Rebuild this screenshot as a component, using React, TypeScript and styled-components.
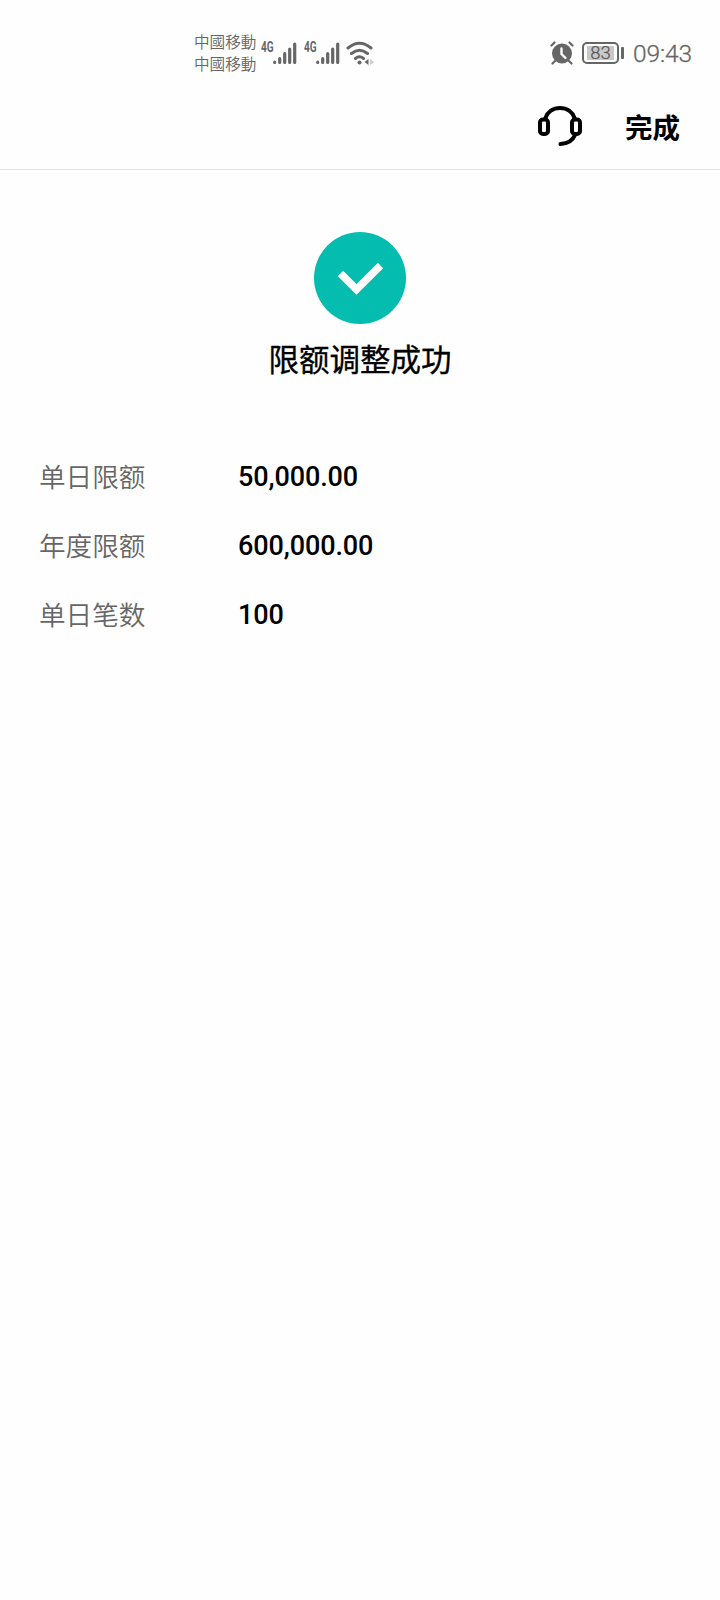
import React from 'react';
import styled, { createGlobalStyle } from 'styled-components';

const GlobalStyle = createGlobalStyle`
  * { box-sizing: border-box; }
  body { margin: 0; background: #fefefe; }
`;

const Screen = styled.main`
  width: 720px;
  height: 1600px;
  overflow: hidden;
  background: #fefefe;
  color: #000;
  font-family: Roboto, "Noto Sans CJK SC", sans-serif;
`;

const StatusBar = styled.div`
  display: flex;
  justify-content: space-between;
  height: 84px;
  padding: 30px 27px 0 194px;
  color: #666;
`;

const StatusGroup = styled.div`
  display: flex;
  align-items: flex-start;
`;

const Carriers = styled.div`
  width: 67px;
  font: 350 15.6px/22px "Noto Sans CJK TC", sans-serif;
  white-space: nowrap;
`;

const Signal = styled.div`
  display: flex;
  align-items: flex-start;
  width: 43px;
  padding-top: 11px;
`;

const Network = styled.span`
  display: block;
  width: 12px;
  font: 700 14px/13px Roboto, sans-serif;
  transform: scaleX(0.72);
  transform-origin: left center;
`;

const Wifi = styled.svg`
  margin: 11px 0 0 -1px;
`;

const Alarm = styled.svg`
  margin: 11px 8px 0 0;
`;

const Battery = styled.div`
  display: flex;
  align-items: center;
  gap: 2px;
  height: 22px;
  margin-top: 12px;
`;

const BatteryBody = styled.div`
  width: 37px;
  height: 22px;
  padding: 2px;
  border: 2px solid #666;
  border-radius: 5px;
`;

const Charge = styled.div`
  width: 27px;
  height: 14px;
  margin-left: 1px;
  background: #c8c8c8;
  color: #555;
  font: 300 18.5px/15px Roboto, sans-serif;
  -webkit-text-stroke: 0.2px #555;
  text-align: center;
`;

const BatteryTip = styled.span`
  width: 3px;
  height: 12px;
  border-radius: 1px;
  background: #666;
`;

const Clock = styled.time`
  width: 60px;
  margin: 12px 0 0 9px;
  font: 300 24.5px/24px Roboto, sans-serif;
  letter-spacing: -0.1px;
  -webkit-text-stroke: 0.3px #666;
  white-space: nowrap;
`;

const Header = styled.header`
  display: flex;
  align-items: center;
  justify-content: flex-end;
  gap: 42px;
  height: 86px;
  padding: 0 40px 2px 0;
  border-bottom: 1px solid #e4e4e4;
`;

const DoneButton = styled.button`
  padding: 0;
  border: 0;
  background: none;
  color: #000;
  font: 700 27.5px/40px "Noto Sans CJK SC", sans-serif;
`;

const Result = styled.section`
  display: flex;
  flex-direction: column;
  align-items: center;
  padding-top: 62px;
`;

const Title = styled.h1`
  margin: 12px 0 0;
  font: 400 30.5px/44px "Noto Sans CJK SC", sans-serif;
  -webkit-text-stroke: 0.35px #000;
`;

const Limits = styled.dl`
  display: grid;
  grid-template-columns: 199px 1fr;
  grid-auto-rows: 69px;
  align-items: center;
  margin: 62px 39px 0;
`;

const Label = styled.dt`
  padding-bottom: 2px;
  color: #666;
  font: 350 26.6px/40px "Noto Sans CJK SC", sans-serif;
`;

const Value = styled.dd`
  margin: 0;
  font: 500 27px/40px Roboto, sans-serif;
  letter-spacing: -0.1px;
`;

const limits = [
  ['单日限额', '50,000.00'],
  ['年度限额', '600,000.00'],
  ['单日笔数', '100'],
];

const SignalMeter = () => (
  <Signal>
    <Network>4G</Network>
    <svg width="24" height="24" viewBox="0 0 24 24" stroke="#666" strokeWidth="3.2" strokeLinecap="round">
      <path d="M1.7 21.2v.2M6.7 17.5v4M11.7 12.5v9M16.7 8v13.5M21.7 3v18.5" />
    </svg>
  </Signal>
);

export default function App() {
  return (
    <Screen>
      <GlobalStyle />
      <StatusBar>
        <StatusGroup>
          <Carriers>中國移動<br />中國移動</Carriers>
          <SignalMeter />
          <SignalMeter />
          <Wifi width="28" height="24" viewBox="0 0 28 24" fill="none" stroke="#666" strokeWidth="3" strokeLinecap="round">
            <path d="M2 7Q13.5-2.500 25 7M5.5 12.5Q13.5 6 21.5 12.5M9.5 17.5Q13.5 14 17.5 17.5" />
            <circle cx="13.5" cy="21.5" r="2" fill="#666" stroke="none" />
            <path d="M22.5 18v6l-4-3z" fill="#666" stroke="none" />
            <path d="M24 18v6l4-3z" fill="#ccc" stroke="none" />
          </Wifi>
        </StatusGroup>
        <StatusGroup>
          <Alarm width="24" height="24" viewBox="0 0 24 24" fill="none" stroke="#666" strokeWidth="2.2" strokeLinecap="round">
            <circle cx="12" cy="12.5" r="10" fill="#666" stroke="none" />
            <path d="M1.5 4.5l3-3M19.5 1.5l3 3M5 20l-2.500 2.500M19 20l2.500 2.500" />
            <path d="M11.5 7.5v5.500l4 4" stroke="#fefefe" strokeWidth="2.4" />
          </Alarm>
          <Battery>
            <BatteryBody><Charge>83</Charge></BatteryBody>
            <BatteryTip />
          </Battery>
          <Clock>09:43</Clock>
        </StatusGroup>
      </StatusBar>
      <Header>
        <svg width="46" height="42" viewBox="0 0 46 42" fill="none" stroke="#000" strokeWidth="4" strokeLinecap="round" aria-label="客服">
          <rect x="3" y="14.5" width="8" height="14.5" rx="3" />
          <rect x="35" y="14.5" width="8" height="14.5" rx="3" />
          <path d="M8.5 13C10.5 7 16 3 23 3s12.500 4 14.500 10M38 30c-2 5-7 8.500-14.500 9" />
        </svg>
        <DoneButton>完成</DoneButton>
      </Header>
      <Result>
        <svg width="92" height="92" viewBox="0 0 92 92">
          <circle cx="46" cy="46" r="46" fill="#05bdae" />
          <path d="M26.5 41.5L42.5 57.5L66.5 33.5" fill="none" stroke="#fff" strokeWidth="7.5" />
        </svg>
        <Title>限额调整成功</Title>
      </Result>
      <Limits>
        {limits.map(([label, value]) => (
          <React.Fragment key={label}>
            <Label>{label}</Label>
            <Value>{value}</Value>
          </React.Fragment>
        ))}
      </Limits>
    </Screen>
  );
}
